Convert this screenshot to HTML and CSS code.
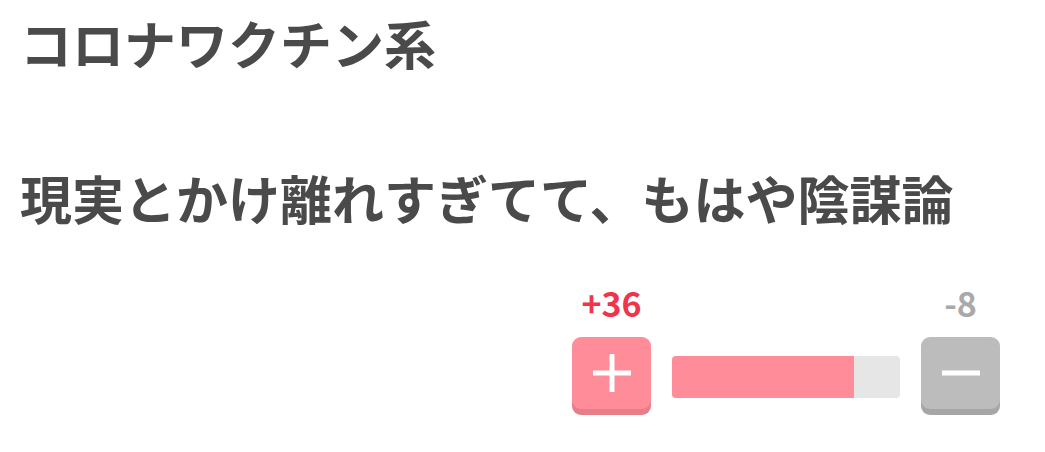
FILE: index.html
```html
<!DOCTYPE html>
<html lang="ja">
<head>
  <meta charset="UTF-8" />
  <meta name="viewport" content="width=device-width, initial-scale=1.0"/>
  <title>コロナワクチン系</title>
  <link rel="stylesheet" href="styles.css">
</head>
<body>
  <main class="post">
    <h1 class="post-category">コロナワクチン系</h1>
    <p class="post-text">現実とかけ離れすぎてて、もはや陰謀論</p>

    <div class="vote">
      <div class="vote-side">
        <span class="vote-count plus">+36</span>
        <button class="vote-btn plus" aria-label="plus">
          <svg width="38" height="38" viewBox="0 0 38 38">
            <rect x="0" y="16.5" width="38" height="5" fill="#fff"/>
            <rect x="16.5" y="0" width="5" height="38" fill="#fff"/>
          </svg>
        </button>
      </div>
      <div class="vote-bar">
        <div class="vote-fill" style="width: 80%;"></div>
      </div>
      <div class="vote-side">
        <span class="vote-count minus">-8</span>
        <button class="vote-btn minus" aria-label="minus">
          <svg width="38" height="38" viewBox="0 0 38 38">
            <rect x="0" y="16.5" width="38" height="5" fill="#fff"/>
          </svg>
        </button>
      </div>
    </div>
  </main>
</body>
</html>
```

FILE: styles.css
```css
body {
  margin: 0;
  background: #fff;
  color: #4a4a4a;
  font-family: 'Noto Sans CJK JP', 'Noto Sans', sans-serif;
}
.post {
  padding: 13px 45px 0 20px;
}
.post-category,
.post-text {
  margin: 0;
  font-size: 52px;
  line-height: 60px;
  font-weight: bold;
  white-space: nowrap;
}
.post-text {
  margin-top: 95px;
}
.vote {
  display: flex;
  justify-content: flex-end;
  align-items: flex-end;
  gap: 21px;
  margin-top: 58px;
}
.vote-side {
  display: flex;
  flex-direction: column;
  align-items: center;
  width: 79px;
}
.vote-count {
  font-size: 34px;
  line-height: 34px;
  font-weight: bold;
  margin-bottom: 17px;
}
.vote-count.plus {
  color: #f0344b;
}
.vote-count.minus {
  color: #a9a9a9;
}
.vote-btn {
  display: flex;
  align-items: center;
  justify-content: center;
  width: 79px;
  height: 72px;
  margin-bottom: 6px;
  padding: 0;
  border: none;
  border-radius: 9px;
  cursor: pointer;
}
.vote-btn.plus {
  background: #ff8c99;
  box-shadow: 0 6px 0 #e77d89;
}
.vote-btn.minus {
  background: #bcbcbc;
  box-shadow: 0 6px 0 #a6a6a6;
}
.vote-bar {
  width: 228px;
  height: 42px;
  margin-bottom: 17px;
  background: #e6e6e6;
  border-radius: 4px;
  overflow: hidden;
}
.vote-fill {
  height: 100%;
  background: #ff8c99;
}
```
